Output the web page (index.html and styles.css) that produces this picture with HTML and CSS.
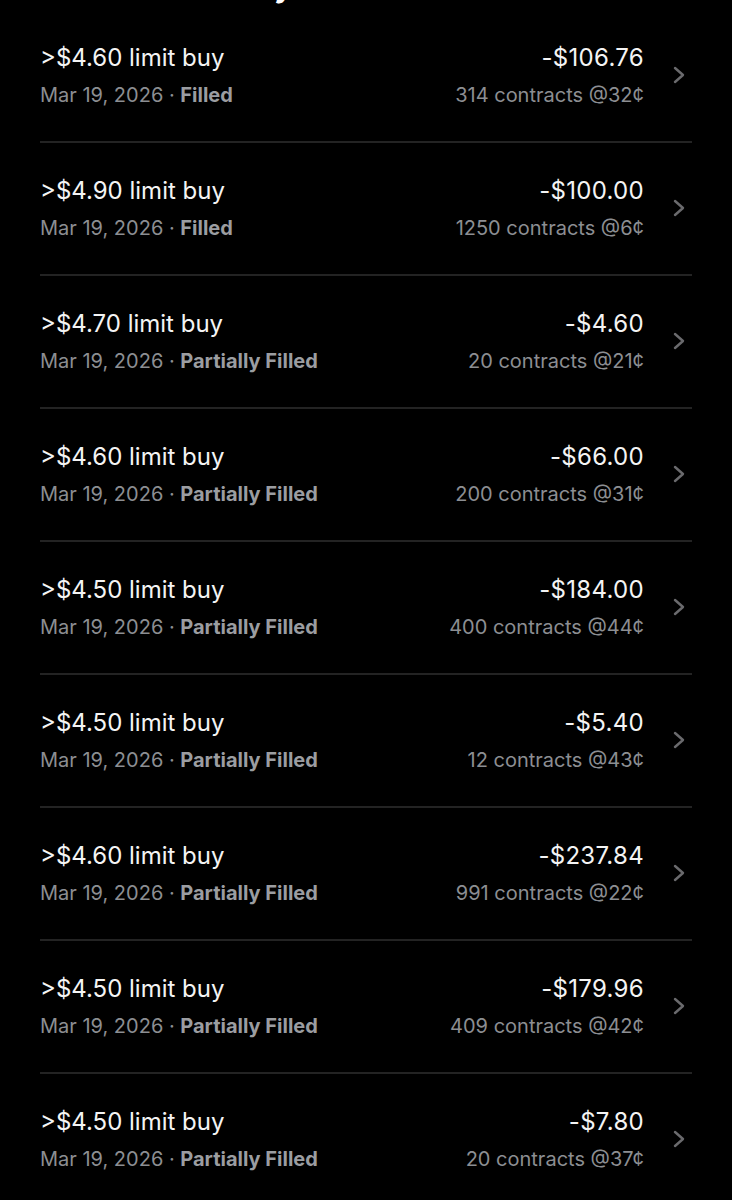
FILE: index.html
```html
<!DOCTYPE html>
<html lang="en">
<head>
    <meta charset="UTF-8">
    <meta name="viewport" content="width=device-width, initial-scale=1.0">
    <title>Orders</title>
    <link rel="stylesheet" href="styles.css">
</head>
<body>
    <div class="container">
        <h1 class="page-title">Activity</h1>
        <ul class="order-list">
            <li class="order-row">
                <div class="order-left">
                    <span class="order-title">&gt;$4.60 limit buy</span>
                    <span class="order-meta">Mar 19, 2026 · <b>Filled</b></span>
                </div>
                <div class="order-right">
                    <span class="order-amount">-$106.76</span>
                    <span class="order-meta">314 contracts @32¢</span>
                </div>
                <svg class="chevron" viewBox="0 0 14 20"><path d="M3 3 L11 10 L3 17"/></svg>
            </li>
            <li class="order-row">
                <div class="order-left">
                    <span class="order-title">&gt;$4.90 limit buy</span>
                    <span class="order-meta">Mar 19, 2026 · <b>Filled</b></span>
                </div>
                <div class="order-right">
                    <span class="order-amount">-$100.00</span>
                    <span class="order-meta">1250 contracts @6¢</span>
                </div>
                <svg class="chevron" viewBox="0 0 14 20"><path d="M3 3 L11 10 L3 17"/></svg>
            </li>
            <li class="order-row">
                <div class="order-left">
                    <span class="order-title">&gt;$4.70 limit buy</span>
                    <span class="order-meta">Mar 19, 2026 · <b>Partially Filled</b></span>
                </div>
                <div class="order-right">
                    <span class="order-amount">-$4.60</span>
                    <span class="order-meta">20 contracts @21¢</span>
                </div>
                <svg class="chevron" viewBox="0 0 14 20"><path d="M3 3 L11 10 L3 17"/></svg>
            </li>
            <li class="order-row">
                <div class="order-left">
                    <span class="order-title">&gt;$4.60 limit buy</span>
                    <span class="order-meta">Mar 19, 2026 · <b>Partially Filled</b></span>
                </div>
                <div class="order-right">
                    <span class="order-amount">-$66.00</span>
                    <span class="order-meta">200 contracts @31¢</span>
                </div>
                <svg class="chevron" viewBox="0 0 14 20"><path d="M3 3 L11 10 L3 17"/></svg>
            </li>
            <li class="order-row">
                <div class="order-left">
                    <span class="order-title">&gt;$4.50 limit buy</span>
                    <span class="order-meta">Mar 19, 2026 · <b>Partially Filled</b></span>
                </div>
                <div class="order-right">
                    <span class="order-amount">-$184.00</span>
                    <span class="order-meta">400 contracts @44¢</span>
                </div>
                <svg class="chevron" viewBox="0 0 14 20"><path d="M3 3 L11 10 L3 17"/></svg>
            </li>
            <li class="order-row">
                <div class="order-left">
                    <span class="order-title">&gt;$4.50 limit buy</span>
                    <span class="order-meta">Mar 19, 2026 · <b>Partially Filled</b></span>
                </div>
                <div class="order-right">
                    <span class="order-amount">-$5.40</span>
                    <span class="order-meta">12 contracts @43¢</span>
                </div>
                <svg class="chevron" viewBox="0 0 14 20"><path d="M3 3 L11 10 L3 17"/></svg>
            </li>
            <li class="order-row">
                <div class="order-left">
                    <span class="order-title">&gt;$4.60 limit buy</span>
                    <span class="order-meta">Mar 19, 2026 · <b>Partially Filled</b></span>
                </div>
                <div class="order-right">
                    <span class="order-amount">-$237.84</span>
                    <span class="order-meta">991 contracts @22¢</span>
                </div>
                <svg class="chevron" viewBox="0 0 14 20"><path d="M3 3 L11 10 L3 17"/></svg>
            </li>
            <li class="order-row">
                <div class="order-left">
                    <span class="order-title">&gt;$4.50 limit buy</span>
                    <span class="order-meta">Mar 19, 2026 · <b>Partially Filled</b></span>
                </div>
                <div class="order-right">
                    <span class="order-amount">-$179.96</span>
                    <span class="order-meta">409 contracts @42¢</span>
                </div>
                <svg class="chevron" viewBox="0 0 14 20"><path d="M3 3 L11 10 L3 17"/></svg>
            </li>
            <li class="order-row">
                <div class="order-left">
                    <span class="order-title">&gt;$4.50 limit buy</span>
                    <span class="order-meta">Mar 19, 2026 · <b>Partially Filled</b></span>
                </div>
                <div class="order-right">
                    <span class="order-amount">-$7.80</span>
                    <span class="order-meta">20 contracts @37¢</span>
                </div>
                <svg class="chevron" viewBox="0 0 14 20"><path d="M3 3 L11 10 L3 17"/></svg>
            </li>
        </ul>
    </div>
</body>
</html>
```

FILE: styles.css
```css
* {
    margin: 0;
    padding: 0;
    box-sizing: border-box;
}

html, body {
    background-color: #000000;
}

body {
    font-family: Inter, "Noto Sans", Arial, sans-serif;
    color: #f4f4f4;
    overflow: hidden;
}

.container {
    padding: 0 40px;
}

/* heading scrolled mostly out of view */
.page-title {
    font-size: 30px;
    font-weight: 700;
    line-height: 36px;
    height: 36px;
    margin-top: -32px;
    margin-left: 138px;
    color: #ffffff;
}

.order-list {
    list-style: none;
    margin-top: 6px;
}

.order-row {
    display: flex;
    align-items: center;
    padding: 34px 0 32px;
    border-bottom: 2px solid #232323;
}

.order-left,
.order-right {
    display: flex;
    flex-direction: column;
    gap: 9px;
}

.order-left {
    flex: 1;
}

.order-right {
    align-items: flex-end;
    text-align: right;
}

.order-title,
.order-amount {
    font-size: 24px;
    line-height: 28px;
    color: #f4f4f4;
}

.order-amount {
    letter-spacing: 0.3px;
}

.order-meta {
    font-size: 20px;
    line-height: 28px;
    color: #8c8e92;
    white-space: nowrap;
}

.order-meta b {
    font-weight: 700;
    color: #9b9da1;
}

.chevron {
    width: 14px;
    height: 20px;
    margin-left: 28px;
    margin-right: 6px;
    margin-top: -4px;
    fill: none;
    stroke: #6a6a6d;
    stroke-width: 2.4;
    stroke-linecap: round;
    stroke-linejoin: round;
}
```
